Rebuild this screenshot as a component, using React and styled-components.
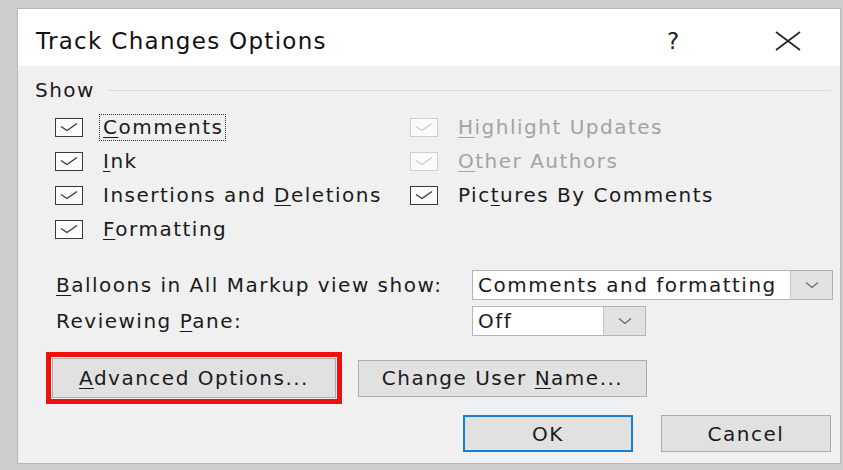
import React from 'react'
import styled, { createGlobalStyle, css } from 'styled-components'

const GlobalStyle = createGlobalStyle`
  html, body {
    margin: 0;
    padding: 0;
    background: #cdcdcd;
  }
  body {
    font-family: "DejaVu Sans", "Liberation Sans", sans-serif;
    color: #1b1b1b;
  }
  #root {
    height: 470px;
    overflow: hidden;
  }
`

const Dialog = styled.div`
  box-sizing: border-box;
  margin: 8px 0 0 17px;
  width: 824px;
  height: 456px;
  border: 1px solid #b8b8b8;
  background: #f0f0f0;
  display: flex;
  flex-direction: column;
`

const TitleBar = styled.div`
  display: flex;
  align-items: center;
  height: 57px;
  padding: 6px 0 0 18px;
  box-sizing: border-box;
  background: #ffffff;
`

const Title = styled.div`
  font-size: 23px;
  letter-spacing: 1.3px;
  color: #111;
  flex: 1;
`

const TitleButton = styled.div`
  width: 70px;
  display: flex;
  justify-content: center;
  font-size: 23px;
  color: #222;
  ${p => p.$gap && css`margin-right: ${p.$gap}px;`}
`

const Body = styled.div`
  flex: 1;
  padding: 12px 9px 0 17px;
  font-size: 20px;
  letter-spacing: 1.5px;
`

const Legend = styled.div`
  display: flex;
  align-items: center;
  height: 24px;
`

const LegendRule = styled.div`
  flex: 1;
  height: 1px;
  margin-left: 13px;
  background: #dadada;
`

const CheckGrid = styled.div`
  display: grid;
  grid-template-columns: 355px 1fr;
  grid-auto-rows: 34px;
  margin: 8px 0 0 20px;
`

const CheckRow = styled.label`
  display: flex;
  align-items: center;
  color: ${p => (p.$disabled ? '#a3a3a3' : '#1b1b1b')};
`

const Box = styled.span`
  box-sizing: border-box;
  width: 28px;
  height: 19px;
  border: 1px solid ${p => (p.$disabled ? '#cfcfcf' : '#3a3a3a')};
  background: #fbfbfb;
  display: flex;
  align-items: center;
  justify-content: center;
  margin-right: 16px;
  flex-shrink: 0;
`

const Caption = styled.span`
  padding: 2px 2px 3px 3px;
  border: 1px dotted ${p => (p.$focused ? '#333' : 'transparent')};
  line-height: 20px;
`

const Key = styled.span`
  text-decoration: underline;
  text-decoration-thickness: 1px;
  text-underline-offset: 3px;
`

const FieldGrid = styled.div`
  display: grid;
  grid-template-columns: 416px auto;
  row-gap: 6px;
  margin: 24px 0 0 21px;
  align-items: center;
`

const Select = styled.div`
  box-sizing: border-box;
  width: ${p => p.$w}px;
  height: 30px;
  display: flex;
  border: 1px solid #b4b4b4;
  background: #ffffff;
`

const SelectValue = styled.span`
  flex: 1;
  display: flex;
  align-items: center;
  padding-left: 5px;
  white-space: nowrap;
  overflow: hidden;
`

const SelectArrow = styled.span`
  box-sizing: border-box;
  width: 42px;
  background: #e2e2e2;
  border-left: 1px solid #c6c6c6;
  display: flex;
  align-items: center;
  justify-content: center;
`

const ButtonRow = styled.div`
  display: flex;
  align-items: center;
  margin: 16px 0 0 11px;
  gap: 16px;
`

const Highlight = styled.div`
  border: 5px solid #ee0f0f;
  padding: 1px;
`

const Button = styled.div`
  box-sizing: border-box;
  display: flex;
  align-items: center;
  justify-content: center;
  width: ${p => p.$w}px;
  height: ${p => p.$h || 37}px;
  background: #e1e1e1;
  border: ${p => (p.$primary ? '2px solid #1a7fd4' : '1px solid #adadad')};
  white-space: pre;
`

const FooterRow = styled.div`
  display: flex;
  justify-content: flex-end;
  gap: 28px;
  margin-top: 11px;
`

// "&Comments" -> C underlined, like a Win32 mnemonic
const accel = text => {
  const i = text.indexOf('&')
  if (i < 0) return <span>{text}</span>
  return (
    <span>
      {text.slice(0, i)}
      <Key>{text[i + 1]}</Key>
      {text.slice(i + 2)}
    </span>
  )
}

const Tick = ({ color }) => (
  <svg width="20" height="12" viewBox="0 0 20 12">
    <path d="M2 5.5 L8 9.5 L18 2.5" fill="none" stroke={color} strokeWidth="1.4" />
  </svg>
)

const Chevron = () => (
  <svg width="14" height="8" viewBox="0 0 14 8">
    <path d="M1 1.5 L7 6.5 L13 1.5" fill="none" stroke="#666" strokeWidth="1.2" />
  </svg>
)

const CloseIcon = () => (
  <svg width="26" height="20" viewBox="0 0 26 20">
    <path d="M1 1 L25 19 M25 1 L1 19" stroke="#222" strokeWidth="1.6" />
  </svg>
)

const CheckItem = ({ label, disabled, focused }) => (
  <CheckRow $disabled={disabled}>
    <Box $disabled={disabled}>
      <Tick color={disabled ? '#cccccc' : '#3a3a3a'} />
    </Box>
    <Caption $focused={focused}>{accel(label)}</Caption>
  </CheckRow>
)

const Dropdown = ({ value, width }) => (
  <Select $w={width}>
    <SelectValue>{value}</SelectValue>
    <SelectArrow>
      <Chevron />
    </SelectArrow>
  </Select>
)

export default function App() {
  return (
    <>
      <GlobalStyle />
      <Dialog>
        <TitleBar>
          <Title>Track Changes Options</Title>
          <TitleButton $gap={45}>?</TitleButton>
          <TitleButton $gap={17}>
            <CloseIcon />
          </TitleButton>
        </TitleBar>
        <Body>
          <Legend>
            Show
            <LegendRule />
          </Legend>
          <CheckGrid>
            <CheckItem label="&Comments" focused />
            <CheckItem label="&Highlight Updates" disabled />
            <CheckItem label="&Ink" />
            <CheckItem label="&Other Authors" disabled />
            <CheckItem label="Insertions and &Deletions" />
            <CheckItem label="Pic&tures By Comments" />
            <CheckItem label="&Formatting" />
          </CheckGrid>
          <FieldGrid>
            {accel('&Balloons in All Markup view show:')}
            <Dropdown value="Comments and formatting" width={361} />
            {accel('Reviewing &Pane:')}
            <Dropdown value="Off" width={174} />
          </FieldGrid>
          <ButtonRow>
            <Highlight>
              <Button $w={284} $h={40}>
                {accel('&Advanced Options...')}
              </Button>
            </Highlight>
            <Button $w={289}>{accel('Change User &Name...')}</Button>
          </ButtonRow>
          <FooterRow>
            <Button $w={170} $primary>
              OK
            </Button>
            <Button $w={170}>Cancel</Button>
          </FooterRow>
        </Body>
      </Dialog>
    </>
  )
}
